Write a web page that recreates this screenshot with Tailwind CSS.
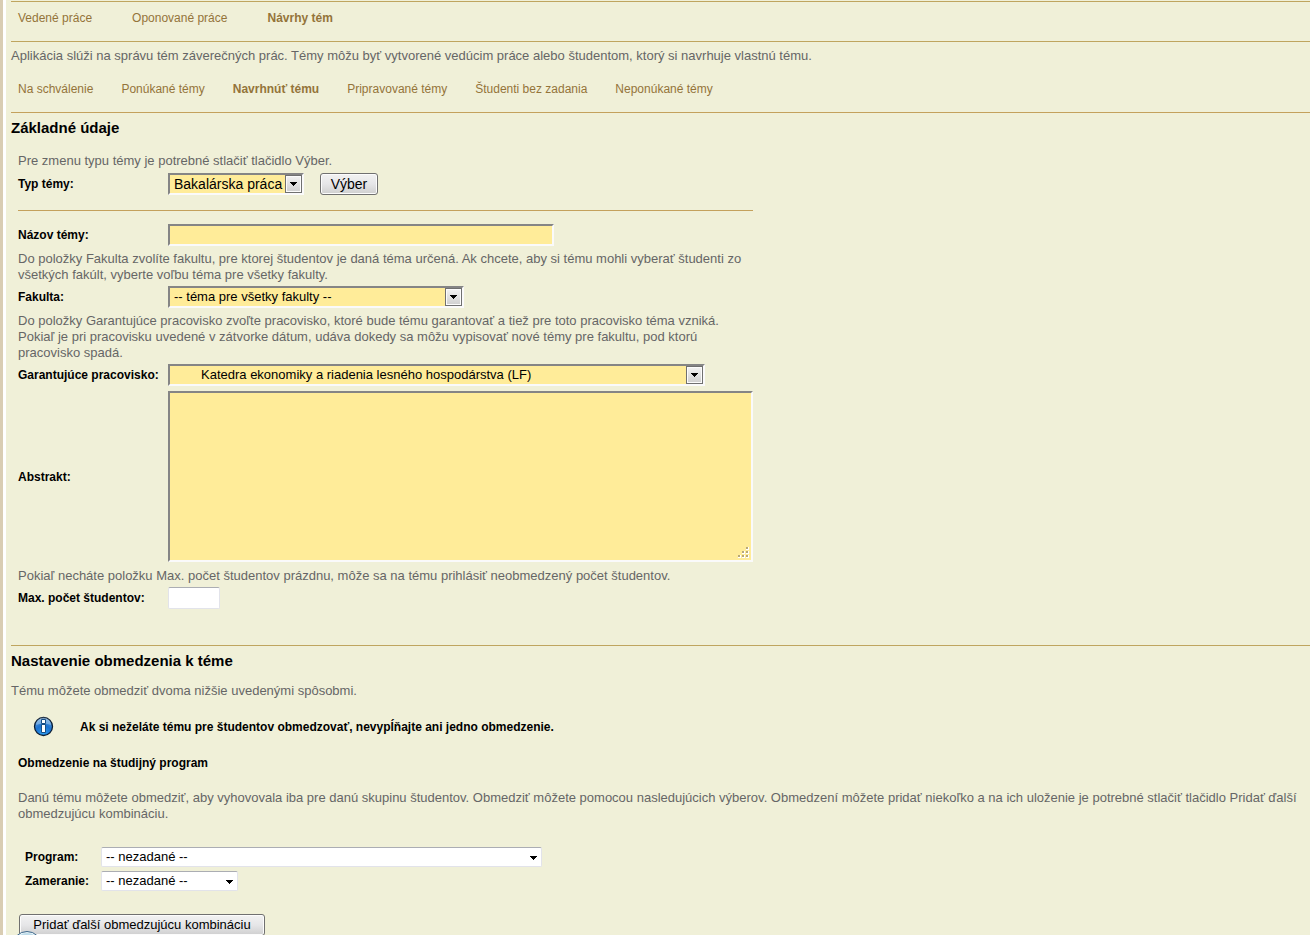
<!DOCTYPE html>
<html lang="sk">
<head>
<meta charset="utf-8">
<title>Návrhy tém</title>
<script src="https://cdn.jsdelivr.net/npm/@tailwindcss/browser@4"></script>
</head>
<body class="min-h-screen overflow-x-hidden bg-[#f0f0d8] font-['Liberation_Sans',Arial,sans-serif] text-[13px] leading-4 text-[#666]">
<div class="min-h-screen border-l-3 border-[#d9cdb3]">
<main class="min-h-screen border-l-3 border-white pt-px pl-[5px]">
  <nav aria-label="Práce" class="flex gap-10 border-t border-[#bfa55f] pt-2 pb-[15px] pl-[7px] text-[12px] text-[#94743a]">
    <a href="#">Vedené práce</a><a href="#">Oponované práce</a><a href="#" class="font-bold">Návrhy tém</a>
  </nav>
  <p class="border-t border-[#bfa55f] pt-[6px]">Aplikácia slúži na správu tém záverečných prác. Témy môžu byť vytvorené vedúcim práce alebo študentom, ktorý si navrhuje vlastnú tému.</p>
  <nav aria-label="Témy" class="flex gap-7 pt-[17px] pb-[15px] pl-[7px] text-[12px] text-[#94743a]">
    <a href="#">Na schválenie</a><a href="#">Ponúkané témy</a><a href="#" class="font-bold">Navrhnúť tému</a><a href="#">Pripravované témy</a><a href="#">Študenti bez zadania</a><a href="#">Neponúkané témy</a>
  </nav>
  <section class="border-t border-[#c4a15c] pt-[7px]">
    <h2 class="text-[15px] leading-4 font-bold text-black">Základné údaje</h2>
    <form class="max-w-[742px] pt-[17px] pl-[7px]">
      <p>Pre zmenu typu témy je potrebné stlačiť tlačidlo Výber.</p>
      <div class="mt-1 flex items-center">
        <label for="typ" class="w-[150px] shrink-0 text-[12px] font-bold text-black">Typ témy:</label>
        <div class="relative w-[136px]">
          <select id="typ" class="block h-[22px] w-full appearance-none border-2 border-t-[#858585] border-l-[#858585] border-r-[#fafafa] border-b-[#fafafa] bg-[#ffec99] pl-1 text-[14px] leading-4 text-black"><option>Bakalárska práca</option></select>
          <span class="pointer-events-none absolute top-[2px] right-[2px] flex h-[18px] w-[17px] items-center justify-center border border-[#707070] bg-linear-to-b from-[#f3f3f3] to-[#cfcfcf] shadow-[inset_0_0_0_1px_#fcfcfc]"><svg width="7" height="4" viewBox="0 0 7 4" shape-rendering="crispEdges"><path d="M0 0h7v1H6v1H5v1H4v1H3V3H2V2H1V1H0z"/></svg></span>
        </div>
        <button type="button" class="ml-4 h-[22px] w-[58px] rounded-[3px] border border-[#707070] bg-linear-to-b from-[#f2f2f2] via-[#e6e6e8] to-[#cfcfcf] text-[14px] leading-4 text-black shadow-[inset_0_0_0_1px_#fcfcfc]">Výber</button>
      </div>
      <hr class="mt-[15px] border-[#c4a15c]">
      <div class="mt-[13px] flex items-center">
        <label for="nazov" class="w-[150px] shrink-0 text-[12px] font-bold text-black">Názov témy:</label>
        <input id="nazov" type="text" class="h-[22px] w-[386px] border-2 border-t-[#858585] border-l-[#858585] border-r-[#fafafa] border-b-[#fafafa] bg-[#ffec99] px-1 text-black">
      </div>
      <p class="mt-[5px]">Do položky Fakulta zvolíte fakultu, pre ktorej študentov je daná téma určená. Ak chcete, aby si tému mohli vyberať študenti zo všetkých fakúlt, vyberte voľbu téma pre všetky fakulty.</p>
      <div class="mt-[3px] flex items-center">
        <label for="fakulta" class="w-[150px] shrink-0 text-[12px] font-bold text-black">Fakulta:</label>
        <div class="relative w-[296px]">
          <select id="fakulta" class="block h-[22px] w-full appearance-none border-2 border-t-[#858585] border-l-[#858585] border-r-[#fafafa] border-b-[#fafafa] bg-[#ffec99] pl-1 text-[13px] leading-4 text-black"><option>-- téma pre všetky fakulty --</option></select>
          <span class="pointer-events-none absolute top-[2px] right-[2px] flex h-[18px] w-[17px] items-center justify-center border border-[#707070] bg-linear-to-b from-[#f3f3f3] to-[#cfcfcf] shadow-[inset_0_0_0_1px_#fcfcfc]"><svg width="7" height="4" viewBox="0 0 7 4" shape-rendering="crispEdges"><path d="M0 0h7v1H6v1H5v1H4v1H3V3H2V2H1V1H0z"/></svg></span>
        </div>
      </div>
      <p class="mt-[5px]">Do položky Garantujúce pracovisko zvoľte pracovisko, ktoré bude tému garantovať a tiež pre toto pracovisko téma vzniká. Pokiaľ je pri pracovisku uvedené v zátvorke dátum, udáva dokedy sa môžu vypisovať nové témy pre fakultu, pod ktorú pracovisko spadá.</p>
      <div class="mt-[3px] flex items-center">
        <label for="pracovisko" class="w-[150px] shrink-0 text-[12px] font-bold text-black">Garantujúce pracovisko:</label>
        <div class="relative w-[537px]">
          <select id="pracovisko" class="block h-[22px] w-full appearance-none border-2 border-t-[#858585] border-l-[#858585] border-r-[#fafafa] border-b-[#fafafa] bg-[#ffec99] pl-[31px] text-[13px] leading-4 text-black"><option>Katedra ekonomiky a riadenia lesného hospodárstva (LF)</option></select>
          <span class="pointer-events-none absolute top-[2px] right-[2px] flex h-[18px] w-[17px] items-center justify-center border border-[#707070] bg-linear-to-b from-[#f3f3f3] to-[#cfcfcf] shadow-[inset_0_0_0_1px_#fcfcfc]"><svg width="7" height="4" viewBox="0 0 7 4" shape-rendering="crispEdges"><path d="M0 0h7v1H6v1H5v1H4v1H3V3H2V2H1V1H0z"/></svg></span>
        </div>
      </div>
      <div class="mt-[5px] flex items-center">
        <label for="abstrakt" class="w-[150px] shrink-0 text-[12px] font-bold text-black">Abstrakt:</label>
        <div class="relative w-[585px]">
          <textarea id="abstrakt" class="block h-[171px] w-full resize-none border-2 border-t-[#858585] border-l-[#858585] border-r-[#fafafa] border-b-[#fafafa] bg-[#ffec99] p-1 text-black"></textarea>
          <svg class="pointer-events-none absolute right-[4px] bottom-[4px]" width="12" height="12" viewBox="0 0 12 12" shape-rendering="crispEdges"><path fill="#fff" d="M9 1h3v3H9zM5 5h3v3H5zM9 5h3v3H9zM1 9h3v3H1zM5 9h3v3H5zM9 9h3v3H9z"/><path fill="#b8a878" d="M9 1h2v2H9zM5 5h2v2H5zM9 5h2v2H9zM1 9h2v2H1zM5 9h2v2H5zM9 9h2v2H9z"/></svg>
        </div>
      </div>
      <p class="mt-[6px]">Pokiaľ necháte položku Max. počet študentov prázdnu, môže sa na tému prihlásiť neobmedzený počet študentov.</p>
      <div class="mt-[3px] flex items-center">
        <label for="max" class="w-[150px] shrink-0 text-[12px] font-bold text-black">Max. počet študentov:</label>
        <input id="max" type="text" class="h-[22px] w-[52px] rounded-[2px] border border-[#e2e3ea] border-t-[#abadb3] bg-white px-1 text-black">
      </div>
    </form>
  </section>
  <section class="mt-9 border-t border-[#bfa55f] pt-[7px]">
    <h2 class="text-[15px] leading-4 font-bold text-black">Nastavenie obmedzenia k téme</h2>
    <p class="mt-[14px]">Tému môžete obmedziť dvoma nižšie uvedenými spôsobmi.</p>
    <div class="mt-[17px] flex items-center gap-[26px] pl-[22px]">
      <svg width="21" height="21" viewBox="0 0 21 21"><defs><radialGradient id="blue" cx=".5" cy=".9" r=".9"><stop offset="0" stop-color="#2ea0f4"/><stop offset=".5" stop-color="#1c72d0"/><stop offset="1" stop-color="#65a5df"/></radialGradient></defs><circle cx="10.5" cy="10.5" r="9" fill="url(#blue)" stroke="#0a1c33" stroke-width="1.3"/><path d="M3 9a7.500 7.500 0 0 1 15 0q-7.500-3-15 0" fill="#fff" opacity=".3"/><path d="M8.500 3.500h4v4h-4zM8.500 8.500h4v8h-4z" fill="#fff" stroke="#164e87"/></svg>
      <strong class="text-[12px] text-black">Ak si neželáte tému pre študentov obmedzovať, nevypĺňajte ani jedno obmedzenie.</strong>
    </div>
    <form class="pl-[7px]">
      <h3 class="mt-[18px] text-[12px] leading-4 font-bold text-black">Obmedzenie na študijný program</h3>
      <p class="mt-[19px]">Danú tému môžete obmedziť, aby vyhovovala iba pre danú skupinu študentov. Obmedziť môžete pomocou nasledujúcich výberov. Obmedzení môžete pridať niekoľko a na ich uloženie je potrebné stlačiť tlačidlo Pridať ďalší obmedzujúcu kombináciu.</p>
      <div class="mt-[25px] flex flex-col gap-1 pl-[7px]">
        <div class="flex items-center">
          <label for="program" class="w-[76px] shrink-0 text-[12px] font-bold text-black">Program:</label>
          <div class="relative w-[441px]">
            <select id="program" class="block h-[20px] w-full appearance-none rounded-[2px] border border-[#e2e3ea] border-t-[#abadb3] bg-white pl-1 text-[13px] leading-4 text-black"><option>-- nezadané --</option></select>
            <svg class="pointer-events-none absolute top-[9px] right-[5px]" width="7" height="4" viewBox="0 0 7 4" shape-rendering="crispEdges"><path d="M0 0h7v1H6v1H5v1H4v1H3V3H2V2H1V1H0z"/></svg>
          </div>
        </div>
        <div class="flex items-center">
          <label for="zameranie" class="w-[76px] shrink-0 text-[12px] font-bold text-black">Zameranie:</label>
          <div class="relative w-[137px]">
            <select id="zameranie" class="block h-[20px] w-full appearance-none rounded-[2px] border border-[#e2e3ea] border-t-[#abadb3] bg-white pl-1 text-[13px] leading-4 text-black"><option>-- nezadané --</option></select>
            <svg class="pointer-events-none absolute top-[9px] right-[5px]" width="7" height="4" viewBox="0 0 7 4" shape-rendering="crispEdges"><path d="M0 0h7v1H6v1H5v1H4v1H3V3H2V2H1V1H0z"/></svg>
          </div>
        </div>
      </div>
      <button type="button" class="mt-[23px] ml-px block h-[22px] w-[246px] rounded-[3px] border border-[#707070] bg-linear-to-b from-[#f2f2f2] via-[#e6e6e8] to-[#cfcfcf] leading-4 text-black shadow-[inset_0_0_0_1px_#fcfcfc]">Pridať ďalší obmedzujúcu kombináciu</button>
    </form>
  </section>
</main>
</div>
<span class="fixed -bottom-[26px] left-[12px] size-[30px] rounded-full border border-[#42698c] bg-[#bfdcea] shadow-[inset_0_0_0_1px_#e8f4f8]"></span>
</body>
</html>
